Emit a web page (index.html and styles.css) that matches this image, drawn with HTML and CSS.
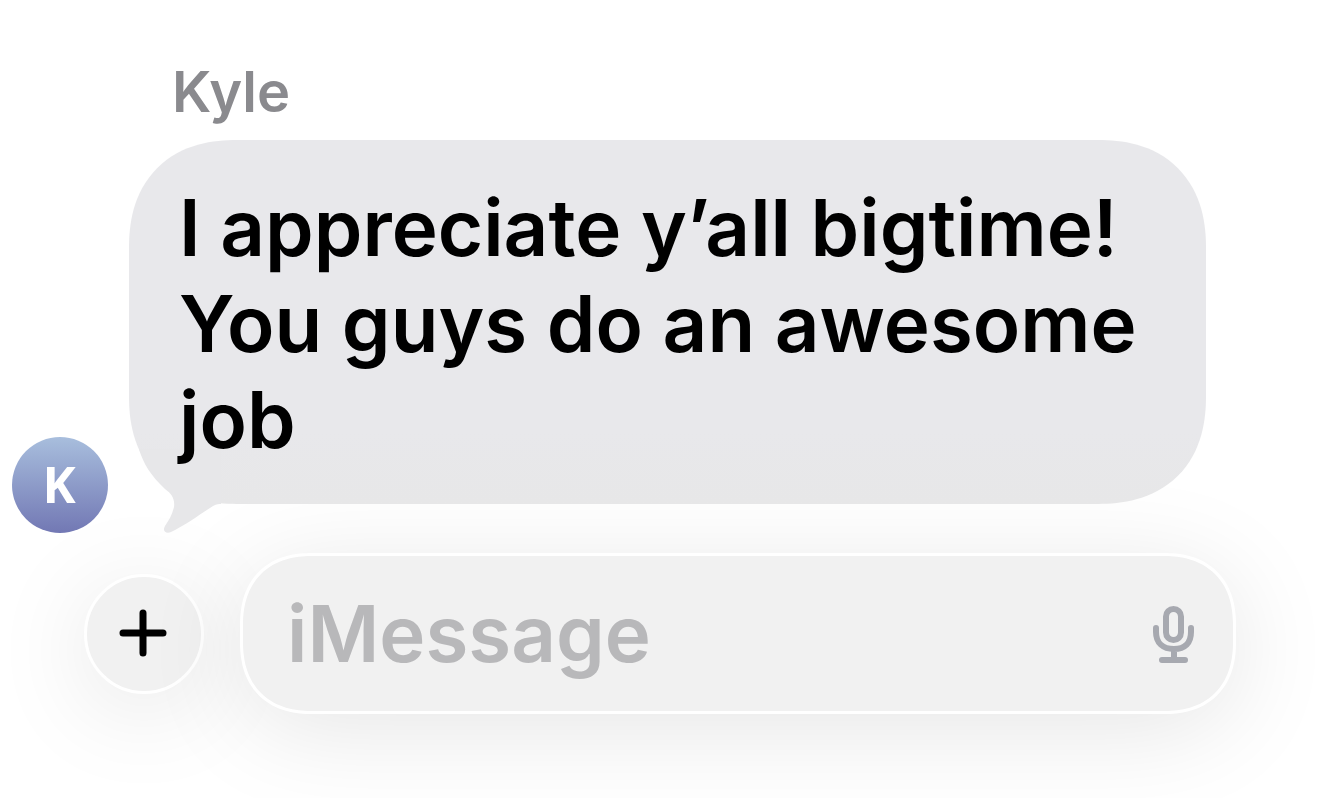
FILE: index.html
```html
<!DOCTYPE html>
<html lang="en">

<head>
    <meta charset="utf-8">
    <meta name="viewport" content="width=device-width, initial-scale=1">
    <title>Messages: Kyle</title>
    <link rel="stylesheet" href="styles.css">
</head>

<body>
    <main class="chat">
        <article class="message">
            <div class="avatar" aria-hidden="true">K</div>
            <div class="content">
                <h1 class="sender">Kyle</h1>
                <div class="bubble">
                    <p>I appreciate y’all bigtime! You guys do an awesome job</p>
                    <svg class="tail" width="92" height="84" viewBox="0 0 92 84" aria-hidden="true">
                        <path d="M10 0C14 14 22 27 36 40C43 45 46 50 45 58C43 66 40 71 36 77C33 82 37 85 42 83C55 77 70 66 84 57C88 55 90 55 92 55V0Z" />
                    </svg>
                </div>
            </div>
        </article>
        <form class="composer">
            <button type="button" class="add" aria-label="Add attachment">
                <svg width="50" height="50" viewBox="0 0 50 50" aria-hidden="true">
                    <path d="M24 4V44M4 24H44" />
                </svg>
            </button>
            <div class="field">
                <input type="text" id="text" placeholder="iMessage" aria-label="iMessage">
                <button type="button" class="mic" aria-label="Dictate">
                    <svg width="42" height="58" viewBox="0 0 42 58" aria-hidden="true">
                        <rect x="13" y="4" width="15" height="31" rx="7.5" />
                        <path d="M3 23V27C3 38 10 44 21 44S38 38 38 27V23M21 44V55M9 55H32" />
                    </svg>
                </button>
            </div>
        </form>
    </main>
</body>

</html>
```
FILE: styles.css
```css
* {
    box-sizing: border-box;
    margin: 0;
}

body {
    min-height: 100vh;
    background-color: white;
    color: black;
    font-family: Inter, "Liberation Sans", sans-serif;
    font-weight: 600;
    overflow-x: hidden;
}

.chat {
    padding-top: 56px;
}

.message {
    display: flex;
    align-items: flex-end;
    gap: 21px;
    padding: 0 114px 0 12px;
}

.avatar {
    display: flex;
    align-items: center;
    justify-content: center;
    flex: none;
    width: 96px;
    height: 96px;
    padding: 0 2px 2px 0;
    border-radius: 50%;
    background-image: linear-gradient(#a8bedd, #7278b4);
    color: white;
    font-family: "Open Sans", sans-serif;
    font-size: 50px;
    font-weight: 700;
}

.content {
    flex: 1;
    min-width: 0;
    padding-bottom: 29px;
}

.sender {
    margin-bottom: 12px;
    padding-left: 43px;
    color: #8a8a8e;
    font-size: 56px;
    font-weight: 600;
    line-height: 72px;
}

.bubble {
    position: relative;
    padding: 40px 48px 36px 50px;
    border-radius: 108px;
    corner-shape: superellipse(1.2);
    background-color: #e8e8eb;
    background-image: linear-gradient(#e8e8eb 80%, #e7e7e8);
    font-size: 78px;
    line-height: 96px;
}

.tail {
    position: absolute;
    left: 0;
    bottom: -29px;
    fill: #e7e7e9;
}

.bubble p {
    position: relative;
    z-index: 1;
}

.composer {
    display: flex;
    align-items: center;
    gap: 36px;
    margin-top: 20px;
    padding: 0 84px;
}

button {
    display: flex;
    align-items: center;
    justify-content: center;
    flex: none;
    padding: 0;
    border: none;
    background: none;
    cursor: pointer;
}

svg {
    fill: none;
    stroke-linecap: round;
}

.add,
.field {
    border: 3px solid white;
    background-color: #f1f1f1;
    box-shadow: 0 16px 100px rgba(0, 0, 0, 0.1);
}

.add {
    width: 120px;
    height: 120px;
    border-radius: 50%;
    stroke: black;
    stroke-width: 7px;
}

.field {
    display: flex;
    align-items: center;
    flex: 1;
    min-width: 0;
    height: 161px;
    padding: 0 38px 0 44px;
    border-radius: 72px;
    corner-shape: superellipse(1.2);
}

.field input {
    flex: 1;
    min-width: 0;
    height: 100%;
    padding: 0;
    border: none;
    outline: none;
    background: none;
    font: inherit;
    font-size: 78px;
}

.field input::placeholder {
    color: #b8b8ba;
    opacity: 1;
}

.mic {
    stroke: #a7a9b0;
    stroke-width: 6px;
}
```
